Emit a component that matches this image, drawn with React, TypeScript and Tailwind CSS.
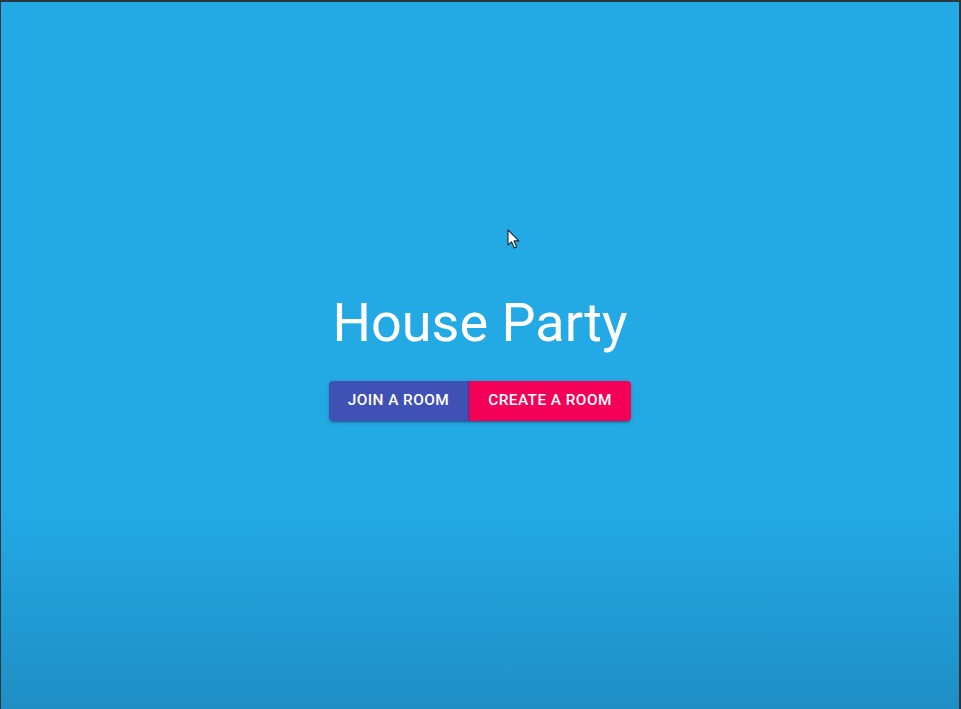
import React from 'react';

const Cursor = () => (
  <svg
    className="absolute left-[507px] top-[229px]"
    width="14"
    height="21"
    viewBox="0 0 14 21"
  >
    <path
      d="M1 1 L1 16 L4.5 12.8 L7.2 19 L9.6 18 L7 11.9 L11.8 11.9 Z"
      fill="#ffffff"
      stroke="#1b2a35"
      strokeWidth="1.1"
      strokeLinejoin="round"
    />
  </svg>
);

const App = () => {
  return (
    <div className="relative w-[961px] h-[709px] overflow-hidden bg-[#2b3640] font-['Roboto',sans-serif]">
      <div className="absolute inset-0 top-[2px] left-[1px] right-[2px] bg-[linear-gradient(to_bottom,#23a9e4_0%,#23a9e4_72%,#1f8ec5_100%)]">
        <div className="flex h-full flex-col items-center justify-center pt-[2px]">
          <h1 className="text-[54px] font-normal leading-[1.15] text-white">
            House Party
          </h1>
          <div className="mt-[27px] flex rounded-[4px] shadow-[0_3px_1px_-2px_rgba(0,0,0,0.2),0_2px_2px_0_rgba(0,0,0,0.14),0_1px_5px_0_rgba(0,0,0,0.12)]">
            <button className="h-[40px] w-[140px] rounded-l-[4px] bg-[#3f51b5] text-[15.4px] font-medium uppercase tracking-[0.44px] text-white border-r border-[#303f9f]">
              Join a Room
            </button>
            <button className="h-[40px] w-[162px] rounded-r-[4px] bg-[#f50057] text-[15.4px] font-medium uppercase tracking-[0.44px] text-white">
              Create a Room
            </button>
          </div>
        </div>
      </div>
      <Cursor />
    </div>
  );
};

export default App;
